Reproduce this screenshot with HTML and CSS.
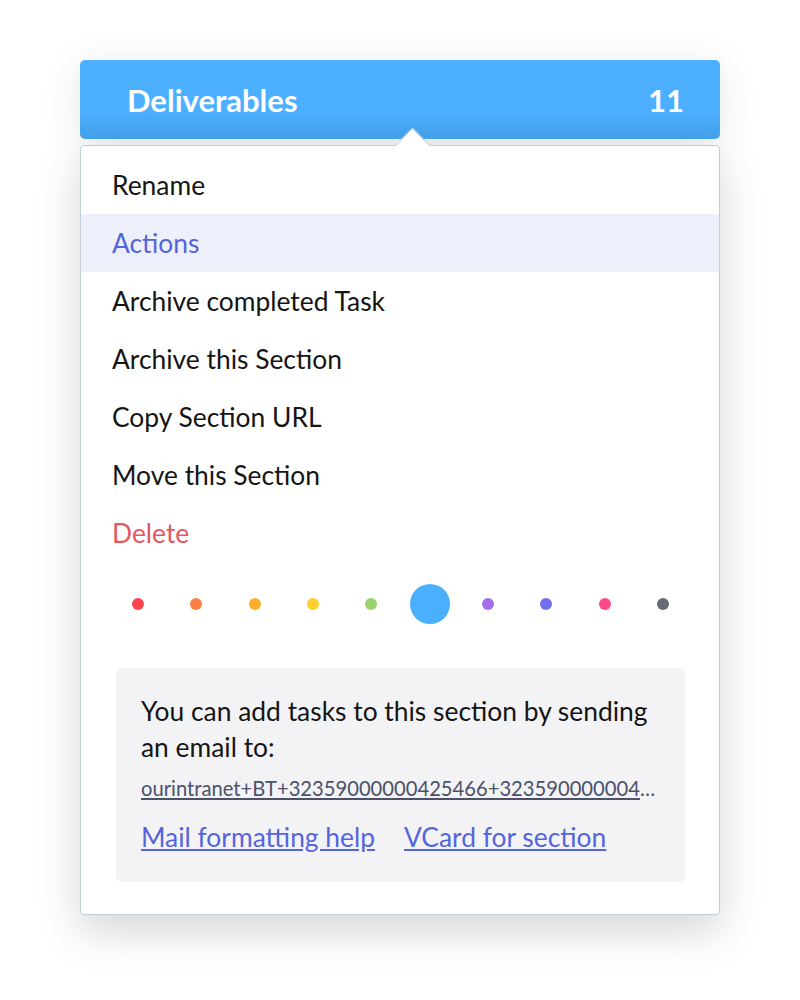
FILE: index.html
```html
<!DOCTYPE html>
<html>
<head>
<meta charset="utf-8">
<link rel="stylesheet" href="styles.css">
</head>
<body>
<div class="popover">
  <div class="header">
    <span class="title">Deliverables</span>
    <span class="count">11</span>
  </div>
  <div class="panel">
    <div class="notch"></div>
    <ul class="menu">
      <li class="item">Rename</li>
      <li class="item active">Actions</li>
      <li class="item">Archive completed Task</li>
      <li class="item">Archive this Section</li>
      <li class="item">Copy Section URL</li>
      <li class="item">Move this Section</li>
      <li class="item danger">Delete</li>
    </ul>
    <div class="colors">
      <span class="cell"><span class="dot c-red"></span></span>
      <span class="cell"><span class="dot c-orange"></span></span>
      <span class="cell"><span class="dot c-amber"></span></span>
      <span class="cell"><span class="dot c-yellow"></span></span>
      <span class="cell"><span class="dot c-green"></span></span>
      <span class="cell"><span class="dot c-blue selected"></span></span>
      <span class="cell"><span class="dot c-purple"></span></span>
      <span class="cell"><span class="dot c-indigo"></span></span>
      <span class="cell"><span class="dot c-pink"></span></span>
      <span class="cell"><span class="dot c-gray"></span></span>
    </div>
    <div class="email-box">
      <p class="email-text">You can add tasks to this section by sending an email to:</p>
      <a class="email-address" href="#">ourintranet+BT+32359000000425466+32359000000425490@tasks.zohoprojects.com</a>
      <div class="links">
        <a class="link" href="#">Mail formatting help</a>
        <a class="link" href="#">VCard for section</a>
      </div>
    </div>
  </div>
</div>
</body>
</html>
```

FILE: styles.css
```css
html, body {
  margin: 0;
  padding: 0;
  background: #ffffff;
}
body {
  font-family: Lato, "Open Sans", "Liberation Sans", sans-serif;
  padding: 60px 80px 85px 80px;
}
.popover {
  width: 640px;
  position: relative;
}
.header {
  height: 79px;
  border-radius: 5px;
  background: linear-gradient(to bottom, #4db1ff 0%, #4cafff 60%, #45a3ec 100%);
  display: flex;
  align-items: center;
  justify-content: space-between;
  padding: 0 36px 0 47px;
  color: #ffffff;
  font-weight: 700;
  font-size: 31px;
  box-shadow: 0 6px 40px rgba(0, 0, 0, 0.10);
}
.panel {
  margin-top: 6px;
  border: 1px solid #c3cdd8;
  border-radius: 4px;
  background: #ffffff;
  position: relative;
  padding: 10px 0 32px 0;
  box-shadow: 0 16px 44px rgba(0, 0, 0, 0.17);
}
.notch {
  position: absolute;
  width: 24px;
  height: 24px;
  background: #ffffff;
  border-top: 1px solid #c3cdd8;
  border-left: 1px solid #c3cdd8;
  transform: rotate(45deg);
  left: 319px;
  top: -13px;
}
.menu {
  list-style: none;
  margin: 0;
  padding: 0;
  position: relative;
}
.item {
  height: 58px;
  display: flex;
  align-items: center;
  padding-left: 31px;
  padding-bottom: 1px;
  box-sizing: border-box;
  font-size: 26.4px;
  color: #151515;
}
.item.active {
  background: #edf0fb;
  color: #5564d9;
}
.item.danger {
  color: #e4575e;
}
.colors {
  display: flex;
  justify-content: space-between;
  align-items: center;
  height: 84px;
  padding: 0 36px 0 37px;
}
.cell {
  width: 40px;
  height: 40px;
  display: flex;
  align-items: center;
  justify-content: center;
}
.dot {
  width: 12px;
  height: 12px;
  border-radius: 50%;
}
.dot.selected {
  width: 40px;
  height: 40px;
}
.c-red { background: #fc4451; }
.c-orange { background: #fd8042; }
.c-amber { background: #feae2b; }
.c-yellow { background: #fdd12f; }
.c-green { background: #98d46b; }
.c-blue { background: #4ab0fe; }
.c-purple { background: #a46ee9; }
.c-indigo { background: #7171ee; }
.c-pink { background: #fb4a8e; }
.c-gray { background: #676b73; }
.email-box {
  margin: 22px 34px 0 35px;
  background: #f3f3f5;
  border-radius: 6px;
  padding: 25px 24px 29px 25px;
}
.email-text {
  margin: 0;
  font-size: 26.4px;
  line-height: 36px;
  color: #151515;
}
.email-address {
  display: block;
  margin-top: 9px;
  font-size: 20.2px;
  line-height: 28px;
  color: #4b5169;
  text-decoration: underline;
  white-space: nowrap;
  overflow: hidden;
  text-overflow: ellipsis;
}
.links {
  display: flex;
  gap: 29px;
  margin-top: 19px;
}
.link {
  font-size: 26.4px;
  line-height: 32px;
  color: #5565dc;
  text-decoration: underline;
}
```
